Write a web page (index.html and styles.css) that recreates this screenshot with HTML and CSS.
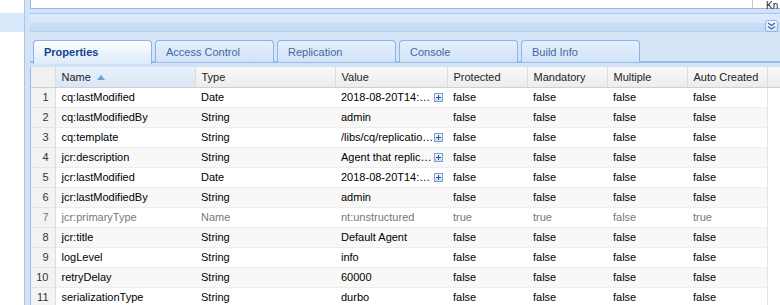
FILE: index.html
```html
<!DOCTYPE html>
<html lang="en">
<head>
    <meta charset="UTF-8">
    <title>CRXDE Lite - Properties</title>
    <link rel="stylesheet" href="styles.css">
</head>
<body>
    <div class="side">
        <div class="side-band"></div>
    </div>

    <div class="main">
        <div class="top-box">
            <div class="top-edit"></div>
            <div class="top-side">Kn</div>
        </div>

        <div class="panel-bar">
            <button class="collapse-btn" type="button" title="Collapse">
                <svg width="9" height="8" viewBox="0 0 9 8" fill="none" xmlns="http://www.w3.org/2000/svg">
                    <path d="M1 1L4.5 3.5L8 1M1 4.5L4.5 7L8 4.5" stroke="#3a6fb6" stroke-width="1.4"/>
                </svg>
            </button>
        </div>

        <div class="tab-strip">
            <div class="tab active">Properties</div>
            <div class="tab">Access Control</div>
            <div class="tab">Replication</div>
            <div class="tab">Console</div>
            <div class="tab">Build Info</div>
        </div>

        <div class="grid-wrap">
            <table class="grid">
                <colgroup>
                    <col class="c-num">
                    <col class="c-name">
                    <col class="c-type">
                    <col class="c-value">
                    <col class="c-flag">
                    <col class="c-flag">
                    <col class="c-flag">
                    <col class="c-flag">
                    <col>
                </colgroup>
                <thead>
                    <tr>
                        <th class="num"></th>
                        <th class="sorted">Name <span class="sort-arrow"></span></th>
                        <th>Type</th>
                        <th>Value</th>
                        <th>Protected</th>
                        <th>Mandatory</th>
                        <th>Multiple</th>
                        <th>Auto Created</th>
                        <th class="filler"></th>
                    </tr>
                </thead>
                <tbody>
                    <tr>
                        <td class="num">1</td><td>cq:lastModified</td><td>Date</td>
                        <td><div class="val"><span>2018-08-20T14:…</span><i class="expand"></i></div></td>
                        <td>false</td><td>false</td><td>false</td><td>false</td><td class="filler"></td>
                    </tr>
                    <tr>
                        <td class="num">2</td><td>cq:lastModifiedBy</td><td>String</td>
                        <td><div class="val"><span>admin</span></div></td>
                        <td>false</td><td>false</td><td>false</td><td>false</td><td class="filler"></td>
                    </tr>
                    <tr>
                        <td class="num">3</td><td>cq:template</td><td>String</td>
                        <td><div class="val"><span>/libs/cq/replicatio…</span><i class="expand"></i></div></td>
                        <td>false</td><td>false</td><td>false</td><td>false</td><td class="filler"></td>
                    </tr>
                    <tr>
                        <td class="num">4</td><td>jcr:description</td><td>String</td>
                        <td><div class="val"><span>Agent that replic…</span><i class="expand"></i></div></td>
                        <td>false</td><td>false</td><td>false</td><td>false</td><td class="filler"></td>
                    </tr>
                    <tr>
                        <td class="num">5</td><td>jcr:lastModified</td><td>Date</td>
                        <td><div class="val"><span>2018-08-20T14:…</span><i class="expand"></i></div></td>
                        <td>false</td><td>false</td><td>false</td><td>false</td><td class="filler"></td>
                    </tr>
                    <tr>
                        <td class="num">6</td><td>jcr:lastModifiedBy</td><td>String</td>
                        <td><div class="val"><span>admin</span></div></td>
                        <td>false</td><td>false</td><td>false</td><td>false</td><td class="filler"></td>
                    </tr>
                    <tr class="protected">
                        <td class="num">7</td><td>jcr:primaryType</td><td>Name</td>
                        <td><div class="val"><span>nt:unstructured</span></div></td>
                        <td>true</td><td>true</td><td>false</td><td>true</td><td class="filler"></td>
                    </tr>
                    <tr>
                        <td class="num">8</td><td>jcr:title</td><td>String</td>
                        <td><div class="val"><span>Default Agent</span></div></td>
                        <td>false</td><td>false</td><td>false</td><td>false</td><td class="filler"></td>
                    </tr>
                    <tr>
                        <td class="num">9</td><td>logLevel</td><td>String</td>
                        <td><div class="val"><span>info</span></div></td>
                        <td>false</td><td>false</td><td>false</td><td>false</td><td class="filler"></td>
                    </tr>
                    <tr>
                        <td class="num">10</td><td>retryDelay</td><td>String</td>
                        <td><div class="val"><span>60000</span></div></td>
                        <td>false</td><td>false</td><td>false</td><td>false</td><td class="filler"></td>
                    </tr>
                    <tr>
                        <td class="num">11</td><td>serializationType</td><td>String</td>
                        <td><div class="val"><span>durbo</span></div></td>
                        <td>false</td><td>false</td><td>false</td><td>false</td><td class="filler"></td>
                    </tr>
                </tbody>
            </table>
        </div>
    </div>
</body>
</html>
```

FILE: styles.css
```css
* {
    box-sizing: border-box;
}

body {
    margin: 0;
    width: 780px;
    height: 305px;
    overflow: hidden;
    display: flex;
    background: #ffffff;
    font-family: "Liberation Sans", Arial, sans-serif;
}

/* left tree column, mostly cut off */
.side {
    width: 25px;
    flex-shrink: 0;
    border-right: 1px solid #a9c6ea;
    padding-top: 13px;
}

.side-band {
    height: 19px;
    background: #d7e9fa;
}

.main {
    flex: 1;
    display: flex;
    flex-direction: column;
    background: #d3e3f7;
    padding-left: 5px;
    min-width: 0;
}

/* bottom edge of the editor above */
.top-box {
    height: 9px;
    display: flex;
    background: #ffffff;
    border-left: 1px solid #99bbe8;
    border-bottom: 1px solid #99bbe8;
}

.top-edit {
    flex: 1;
}

.top-side {
    width: 28px;
    border-left: 1px solid #c9c9c9;
    font-size: 10px;
    line-height: 11px;
    padding-left: 13px;
    color: #222;
    white-space: nowrap;
}

/* panel header with collapse tool */
.panel-bar {
    margin-top: 4px;
    height: 19px;
    display: flex;
    justify-content: flex-end;
    align-items: flex-end;
    background: linear-gradient(#deebfc 0%, #d6e6fa 55%, #c9ddf6 56%, #c6dbf5 100%);
    border-top: 1px solid #a8c7ec;
    border-bottom: 1px solid #b3cfef;
    padding-right: 2px;
}

.collapse-btn {
    width: 13px;
    height: 12px;
    margin-bottom: -1px;
    padding: 0;
    border: 1px solid #8fb3e0;
    border-radius: 3px;
    background: linear-gradient(#f6faff, #dbe8f8);
    display: flex;
    align-items: center;
    justify-content: center;
}

/* tabs */
.tab-strip {
    height: 31px;
    padding: 8px 0 0 3px;
    display: flex;
    gap: 3px;
    background: #d5e5f8;
    border-bottom: 2px solid #99bbe8;
}

.tab {
    width: 119px;
    height: 22px;
    padding: 0 0 0 10px;
    font-size: 11px;
    line-height: 22px;
    color: #416aa3;
    background: linear-gradient(#e3effd, #d3e3f7);
    border: 1px solid #8db2e3;
    border-bottom: none;
    border-radius: 4px 4px 0 0;
    white-space: nowrap;
}

.tab.active {
    font-weight: bold;
    color: #15428b;
    height: 24px;
    margin-bottom: -2px;
    background: linear-gradient(#ffffff, #e7f1fd 60%, #deebfb);
}

/* properties grid */
.grid-wrap {
    flex: 1;
    background: #ffffff;
    border-left: 1px solid #99bbe8;
    margin-top: 4px;
    overflow: hidden;
}

.grid {
    border-collapse: collapse;
    table-layout: fixed;
    width: 750px;
    font-size: 11px;
    color: #000;
}

.c-num { width: 24px; }
.c-name { width: 140px; }
.c-type { width: 140px; }
.c-value { width: 112px; }
.c-flag { width: 80px; }

.grid th {
    height: 20px;
    padding: 0 0 0 6px;
    text-align: left;
    font-weight: normal;
    color: #222;
    background: linear-gradient(#f9f9f9, #ececec);
    border-left: 1px solid #dcdcdc;
    border-bottom: 1px solid #d0d0d0;
    white-space: nowrap;
}

.grid th.num {
    border-left: none;
    background: #f0f0f0;
}

.grid th.sorted {
    background: linear-gradient(#e9f1fa, #d9e6f4);
}

.sort-arrow {
    display: inline-block;
    width: 0;
    height: 0;
    margin-left: 3px;
    vertical-align: 1px;
    border-left: 4px solid transparent;
    border-right: 4px solid transparent;
    border-bottom: 5px solid #6f9fd6;
}

.grid td {
    height: 20px;
    padding: 0 0 0 6px;
    border-bottom: 1px solid #ededed;
    white-space: nowrap;
    overflow: hidden;
}

.grid tbody tr:nth-child(even) td {
    background: #f8f8f8;
}

.grid td.num,
.grid tbody tr:nth-child(even) td.num {
    padding: 0 6px 0 0;
    text-align: right;
    color: #333;
    background: #f3f3f3;
    border-right: 1px solid #dcdcdc;
    border-bottom-color: #e4e4e4;
}

.grid td.filler,
.grid tbody tr:nth-child(even) td.filler {
    background: #ffffff;
    border-bottom: none;
    border-left: 1px solid #e4e4e4;
}

.grid tr.protected td {
    color: #777;
}

.val {
    display: flex;
    align-items: center;
    padding-right: 4px;
}

.val span {
    flex: 1;
    overflow: hidden;
    text-overflow: ellipsis;
}

.expand {
    width: 9px;
    height: 9px;
    flex-shrink: 0;
    border: 1px solid #7c9fcb;
    background: linear-gradient(#f3f8ff, #c9dcf3);
    position: relative;
}

.expand::before,
.expand::after {
    content: "";
    position: absolute;
    background: #2b5a9a;
}

.expand::before {
    left: 1px;
    top: 3px;
    width: 5px;
    height: 1px;
}

.expand::after {
    left: 3px;
    top: 1px;
    width: 1px;
    height: 5px;
}
```
